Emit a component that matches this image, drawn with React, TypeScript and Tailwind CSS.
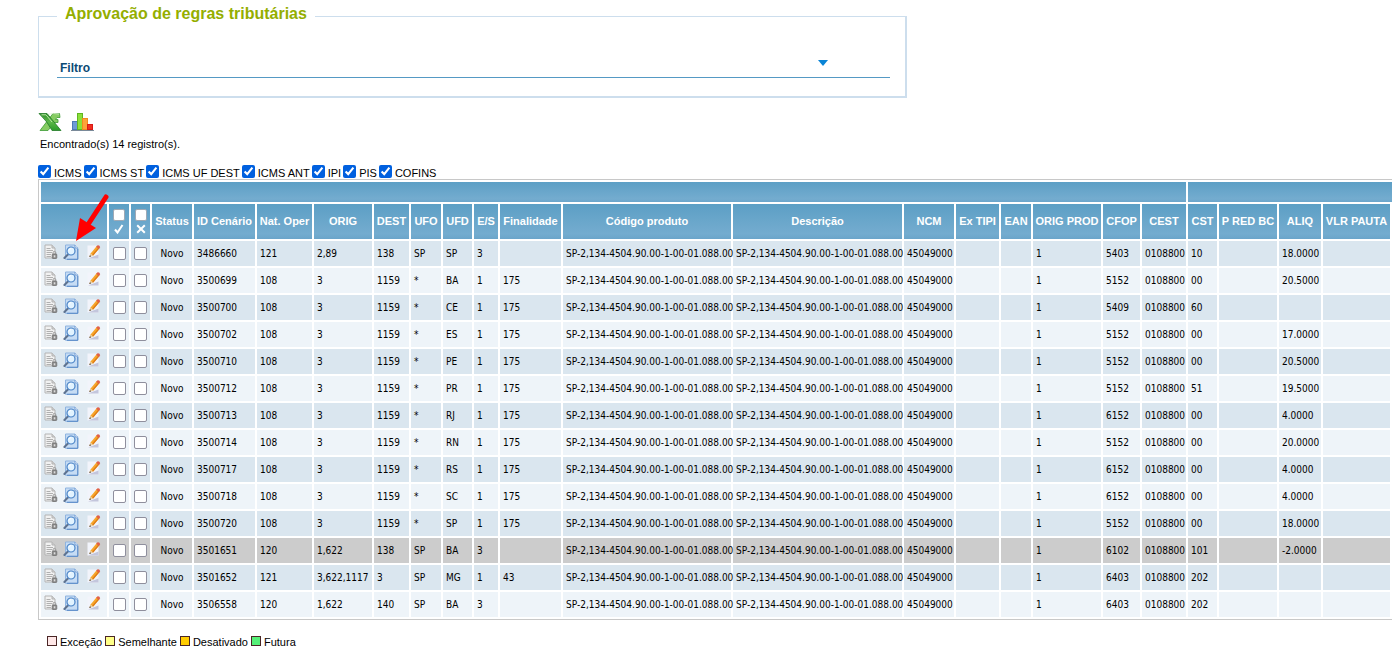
import React, { useState } from 'react';

interface Regra {
  id: string;
  nat: string;
  orig: string;
  dest: string;
  ufo: string;
  ufd: string;
  es: string;
  fin: string;
  cfop: string;
  cst: string;
  aliq: string;
  desativado?: boolean;
}

const PRODUTO = 'SP-2,134-4504.90.00-1-00-01.088.00';

const regras: Regra[] = [
  { id: '3486660', nat: '121', orig: '2,89', dest: '138', ufo: 'SP', ufd: 'SP', es: '3', fin: '', cfop: '5403', cst: '10', aliq: '18.0000' },
  { id: '3500699', nat: '108', orig: '3', dest: '1159', ufo: '*', ufd: 'BA', es: '1', fin: '175', cfop: '5152', cst: '00', aliq: '20.5000' },
  { id: '3500700', nat: '108', orig: '3', dest: '1159', ufo: '*', ufd: 'CE', es: '1', fin: '175', cfop: '5409', cst: '60', aliq: '' },
  { id: '3500702', nat: '108', orig: '3', dest: '1159', ufo: '*', ufd: 'ES', es: '1', fin: '175', cfop: '5152', cst: '00', aliq: '17.0000' },
  { id: '3500710', nat: '108', orig: '3', dest: '1159', ufo: '*', ufd: 'PE', es: '1', fin: '175', cfop: '5152', cst: '00', aliq: '20.5000' },
  { id: '3500712', nat: '108', orig: '3', dest: '1159', ufo: '*', ufd: 'PR', es: '1', fin: '175', cfop: '5152', cst: '51', aliq: '19.5000' },
  { id: '3500713', nat: '108', orig: '3', dest: '1159', ufo: '*', ufd: 'RJ', es: '1', fin: '175', cfop: '6152', cst: '00', aliq: '4.0000' },
  { id: '3500714', nat: '108', orig: '3', dest: '1159', ufo: '*', ufd: 'RN', es: '1', fin: '175', cfop: '5152', cst: '00', aliq: '20.0000' },
  { id: '3500717', nat: '108', orig: '3', dest: '1159', ufo: '*', ufd: 'RS', es: '1', fin: '175', cfop: '6152', cst: '00', aliq: '4.0000' },
  { id: '3500718', nat: '108', orig: '3', dest: '1159', ufo: '*', ufd: 'SC', es: '1', fin: '175', cfop: '6152', cst: '00', aliq: '4.0000' },
  { id: '3500720', nat: '108', orig: '3', dest: '1159', ufo: '*', ufd: 'SP', es: '1', fin: '175', cfop: '5152', cst: '00', aliq: '18.0000' },
  { id: '3501651', nat: '120', orig: '1,622', dest: '138', ufo: 'SP', ufd: 'BA', es: '3', fin: '', cfop: '6102', cst: '101', aliq: '-2.0000', desativado: true },
  { id: '3501652', nat: '121', orig: '3,622,1117', dest: '3', ufo: 'SP', ufd: 'MG', es: '1', fin: '43', cfop: '6403', cst: '202', aliq: '' },
  { id: '3506558', nat: '120', orig: '1,622', dest: '140', ufo: 'SP', ufd: 'BA', es: '3', fin: '', cfop: '6403', cst: '202', aliq: '' },
];

// Largura de cada coluna, já com o espaçamento entre células
const larguras = [68, 22, 21, 42, 63, 57, 60, 37, 32, 31, 26, 63, 170, 171, 52, 45, 32, 70, 39, 46, 31, 60, 44, 69, 60];

const titulos = [
  'Status', 'ID Cenário', 'Nat. Oper', 'ORIG', 'DEST', 'UFO', 'UFD', 'E/S', 'Finalidade', 'Código produto',
  'Descrição', 'NCM', 'Ex TIPI', 'EAN', 'ORIG PROD', 'CFOP', 'CEST', 'CST', 'P RED BC', 'ALIQ', 'VLR PAUTA', '',
];

const impostos = ['ICMS', 'ICMS ST', 'ICMS UF DEST', 'ICMS ANT', 'IPI', 'PIS', 'COFINS'];

const legendas = [
  { nome: 'Exceção', cor: 'bg-[#ffe8e8]' },
  { nome: 'Semelhante', cor: 'bg-[#ffff88]' },
  { nome: 'Desativado', cor: 'bg-[#ffcc00]' },
  { nome: 'Futura', cor: 'bg-[#55f078]' },
];

const TH = 'bg-linear-to-b from-[#5c9fc5] via-[#74accf] via-85% to-[#6ba5ca] p-0 text-center font-bold text-white';
const CAIXA = 'mx-auto block size-[13px] appearance-none rounded-[2px] border border-[#8f8f9d] bg-white checked:bg-[#0060df]';
const CAIXA_TH = 'm-0 size-3 appearance-none rounded-[2px] border border-[#9fa9b5] bg-white checked:bg-[#0060df]';

const ExcelIcon = () => (
  <svg width="24" height="20" viewBox="0 0 24 20">
    <defs>
      <linearGradient id="xl" x1="0" y1="0" x2="0" y2="1">
        <stop offset="0" stopColor="#2f8f2b" />
        <stop offset="0.5" stopColor="#5cb848" />
        <stop offset="1" stopColor="#2b9a2b" />
      </linearGradient>
    </defs>
    <path d="M21.5 1.5H15L2 18.5H10L16.5 10.5H20V7.5H17.5L19 5.5H22Z" fill="#86cc62" stroke="#3c9a35" strokeWidth="0.8" />
    <path d="M10 2.2Q15 0.8 21 2" fill="none" stroke="#dff3d4" strokeWidth="0.8" />
    <path d="M1 1.5H9L23 18.5H14Q10 10 1 1.5Z" fill="url(#xl)" stroke="#217a26" strokeWidth="0.8" />
    <path d="M3.5 2.8H8L14 10" fill="none" stroke="#b9e6a4" strokeWidth="1" />
  </svg>
);

const GraficoIcon = () => (
  <svg width="23" height="20" viewBox="0 0 23 20">
    <rect x="1.5" y="9.5" width="5" height="8" fill="#6d9ad6" stroke="#4c78b5" />
    <rect x="6.5" y="1.5" width="5" height="16" fill="#8be03a" stroke="#5fb522" />
    <rect x="11.5" y="6.5" width="5" height="11" fill="#ffa23a" stroke="#f08a1e" />
    <rect x="16.5" y="12.5" width="5" height="5" fill="#f0301f" stroke="#d81818" />
    <path d="M0 18.5H23" stroke="#7a8a99" />
  </svg>
);

const DocumentoIcon = () => (
  <svg width="14" height="16" viewBox="0 0 14 16">
    <path d="M1 1H8L11 4V14H1Z" fill="#f1f1f1" stroke="#b4b4b4" />
    <path d="M8 1V4H11" fill="#cfcfcf" stroke="#b4b4b4" />
    <path d="M2.5 4.5H6.5M2.5 6.5H9M2.5 8.5H8M2.5 10.5H7M2.5 12.5H7" stroke="#b0b0b0" />
    <path d="M9 10V8.8a1.4 1.4 0 0 1 2.8 0V10" fill="none" stroke="#9a9a9a" />
    <rect x="8.2" y="10" width="4.6" height="4.5" rx="0.8" fill="#8b8b8b" stroke="#6a6a6a" strokeWidth="0.7" />
    <rect x="9.8" y="11.3" width="1.5" height="2" fill="#dddddd" />
  </svg>
);

const LupaIcon = () => (
  <svg width="16" height="16" viewBox="0 0 16 16">
    <path d="M2.5 1H12L14.8 3.8V15.3H2.5Z" fill="#c6dcf4" stroke="#8fb4e0" />
    <path d="M12 1V4H14.8" fill="#eef6ff" stroke="#5b8cc9" strokeWidth="0.8" />
    <path d="M14.8 5V15.3H4" fill="none" stroke="#4f82c4" strokeWidth="0.9" />
    <path d="M5.2 10.2L1.4 14" stroke="#5f7390" strokeWidth="2" strokeLinecap="round" />
    <circle cx="8" cy="7" r="4" fill="#e2f3ff" stroke="#4a83c6" strokeWidth="1.2" />
    <path d="M5.8 6.6a2.4 2.4 0 0 1 2.4-2" fill="none" stroke="#ffffff" />
  </svg>
);

const LapisIcon = () => (
  <svg width="14" height="16" viewBox="0 0 14 16">
    <path d="M0.5 1.5H9L11.5 5V14.5H0.5Z" fill="#f2f4fb" />
    <path d="M1 14.5L11.5 10.5V14.5Z" fill="#c3c6dc" />
    <path d="M2.4 12.8L3.6 9.4L9.8 2L12.4 4.3L6.2 11.6Z" fill="#f7a62b" />
    <path d="M5 10.9L11.3 3.4L12.4 4.3L6.2 11.6Z" fill="#dd7a17" />
    <path d="M9.2 2.8L10.6 1.2Q12.6 0.8 13.2 3.2L11.8 4.9Z" fill="#e0604a" />
    <path d="M2.4 12.8L3.6 9.4L6.2 11.6Z" fill="#ecd0a4" />
    <path d="M2.2 13.1L3 11.2L4.2 12.3Z" fill="#333333" />
  </svg>
);

const MarcarIcon = () => (
  <svg width="10" height="10" viewBox="0 0 10 10">
    <path d="M1 5.5L3.5 8.5L8.5 1" fill="none" stroke="#ffffff" strokeWidth="2" />
  </svg>
);

const RejeitarIcon = () => (
  <svg width="10" height="10" viewBox="0 0 10 10">
    <path d="M1.2 1.2L8.8 8.8M8.8 1.2L1.2 8.8" stroke="#ffffff" strokeWidth="2" />
  </svg>
);

const Seta = () => (
  <svg className="pointer-events-none absolute top-3 left-9" width="36" height="50" viewBox="0 0 36 50">
    <path d="M31 5L14 31" stroke="#ff0000" strokeWidth="5" strokeLinecap="round" />
    <path d="M1 49L5 26L21 36Z" fill="#ff0000" />
  </svg>
);

const LinhaRegra = ({ regra: r, par }: { regra: Regra; par: boolean }) => {
  const cor = r.desativado ? 'bg-[#cccccc]' : par ? 'bg-[#dae6ef]' : 'bg-[#eef4f9]';
  const valores = [
    r.id, r.nat, r.orig, r.dest, r.ufo, r.ufd, r.es, r.fin, PRODUTO, PRODUTO, '45049000', '', '', '1',
    r.cfop, '0108800', r.cst, '', r.aliq, '', '',
  ];
  return (
    <tr className="h-[25px]">
      <td className={`p-0 pl-[3px] ${cor}`}>
        <div className="flex pb-1">
          <button type="button" aria-label="Histórico"><DocumentoIcon /></button>
          <button type="button" aria-label="Visualizar" className="ml-[5px]"><LupaIcon /></button>
          <button type="button" aria-label="Editar" className="ml-2"><LapisIcon /></button>
        </div>
      </td>
      <td className={`p-0 ${cor}`}>
        <input type="checkbox" aria-label={`Aprovar ${r.id}`} className={CAIXA} />
      </td>
      <td className={`p-0 ${cor}`}>
        <input type="checkbox" aria-label={`Rejeitar ${r.id}`} className={CAIXA} />
      </td>
      <td className={`p-0 text-center ${cor}`}>Novo</td>
      {valores.map((v, i) => <td key={i} className={`p-0 pl-[3px] ${cor}`}>{v}</td>)}
    </tr>
  );
};

const App: React.FC = () => {
  const [aberto, setAberto] = useState(false);

  return (
    <div className="overflow-hidden bg-white pt-[5px] pl-[38px] font-['Liberation_Sans',Arial,sans-serif] text-[11px] text-black">
      <fieldset className="h-[93px] w-full max-w-[869px] border border-r-2 border-b-2 border-[#cddeed] pr-[15px] pl-[18px]">
        <legend className="px-2 pb-[5px] text-base leading-[18px] font-bold text-[#94ae00]">Aprovação de regras tributárias</legend>
        <button
          type="button"
          onClick={() => setAberto(!aberto)}
          aria-expanded={aberto}
          className="mt-8 flex h-[18px] w-full items-start justify-between border-b border-[#5599c4] pr-[62px] pl-[3px] text-left text-xs leading-4 font-bold text-[#0b4a75]"
        >
          <span>Filtro</span>
          <svg width="10" height="6" viewBox="0 0 10 6">
            <path d="M0 0H10L5 6Z" fill="#0a84d6" />
          </svg>
        </button>
      </fieldset>

      {/* Exportação e gráficos */}
      <div className="mt-[14px] flex gap-[9px]">
        <button type="button" aria-label="Exportar para Excel"><ExcelIcon /></button>
        <button type="button" aria-label="Gráfico"><GraficoIcon /></button>
      </div>
      <p className="mt-1.5 pl-0.5 leading-3">Encontrado(s) 14 registro(s).</p>

      {/* Impostos exibidos na grade */}
      <div className="mt-[15px] flex gap-[2px]">
        {impostos.map(nome => (
          <label key={nome} className="flex h-[14px] items-start gap-[3px] leading-4">
            <input type="checkbox" defaultChecked className="m-0 block size-[13px] accent-[#0060df]" />
            {nome}
          </label>
        ))}
      </div>

      <div className="relative overflow-hidden border-y border-l border-[#c8c8c8]">
        <table className="w-[1413px] table-fixed border-separate border-spacing-[2px] whitespace-nowrap">
          <colgroup>
            {larguras.map((l, i) => <col key={i} style={{ width: l - 2 }} />)}
          </colgroup>
          <thead>
            <tr className="h-5">
              <th colSpan={20} className={TH}></th>
              <th colSpan={5} className={TH}></th>
            </tr>
            <tr className="h-[35px]">
              <th className={TH}></th>
              <th className={TH}>
                <div className="flex flex-col items-center gap-[3px]">
                  <input type="checkbox" aria-label="Aprovar todos" className={CAIXA_TH} />
                  <MarcarIcon />
                </div>
              </th>
              <th className={TH}>
                <div className="flex flex-col items-center gap-[3px]">
                  <input type="checkbox" aria-label="Rejeitar todos" className={CAIXA_TH} />
                  <RejeitarIcon />
                </div>
              </th>
              {titulos.map((t, i) => <th key={i} className={TH}>{t}</th>)}
            </tr>
          </thead>
          <tbody className="font-['DejaVu_Sans_Condensed',Tahoma,sans-serif] text-[10px] leading-3">
            {regras.map((r, i) => <LinhaRegra key={r.id} regra={r} par={i % 2 === 0} />)}
          </tbody>
        </table>
        <Seta />
      </div>

      {/* Legenda de cores */}
      <div className="mt-4 flex gap-[3px] pl-[9px]">
        {legendas.map(l => (
          <span key={l.nome} className="flex items-start gap-[3px] leading-3">
            <span className={`size-[10px] border border-[#4a2626] ${l.cor}`}></span>
            {l.nome}
          </span>
        ))}
      </div>
    </div>
  );
};

export default App;
